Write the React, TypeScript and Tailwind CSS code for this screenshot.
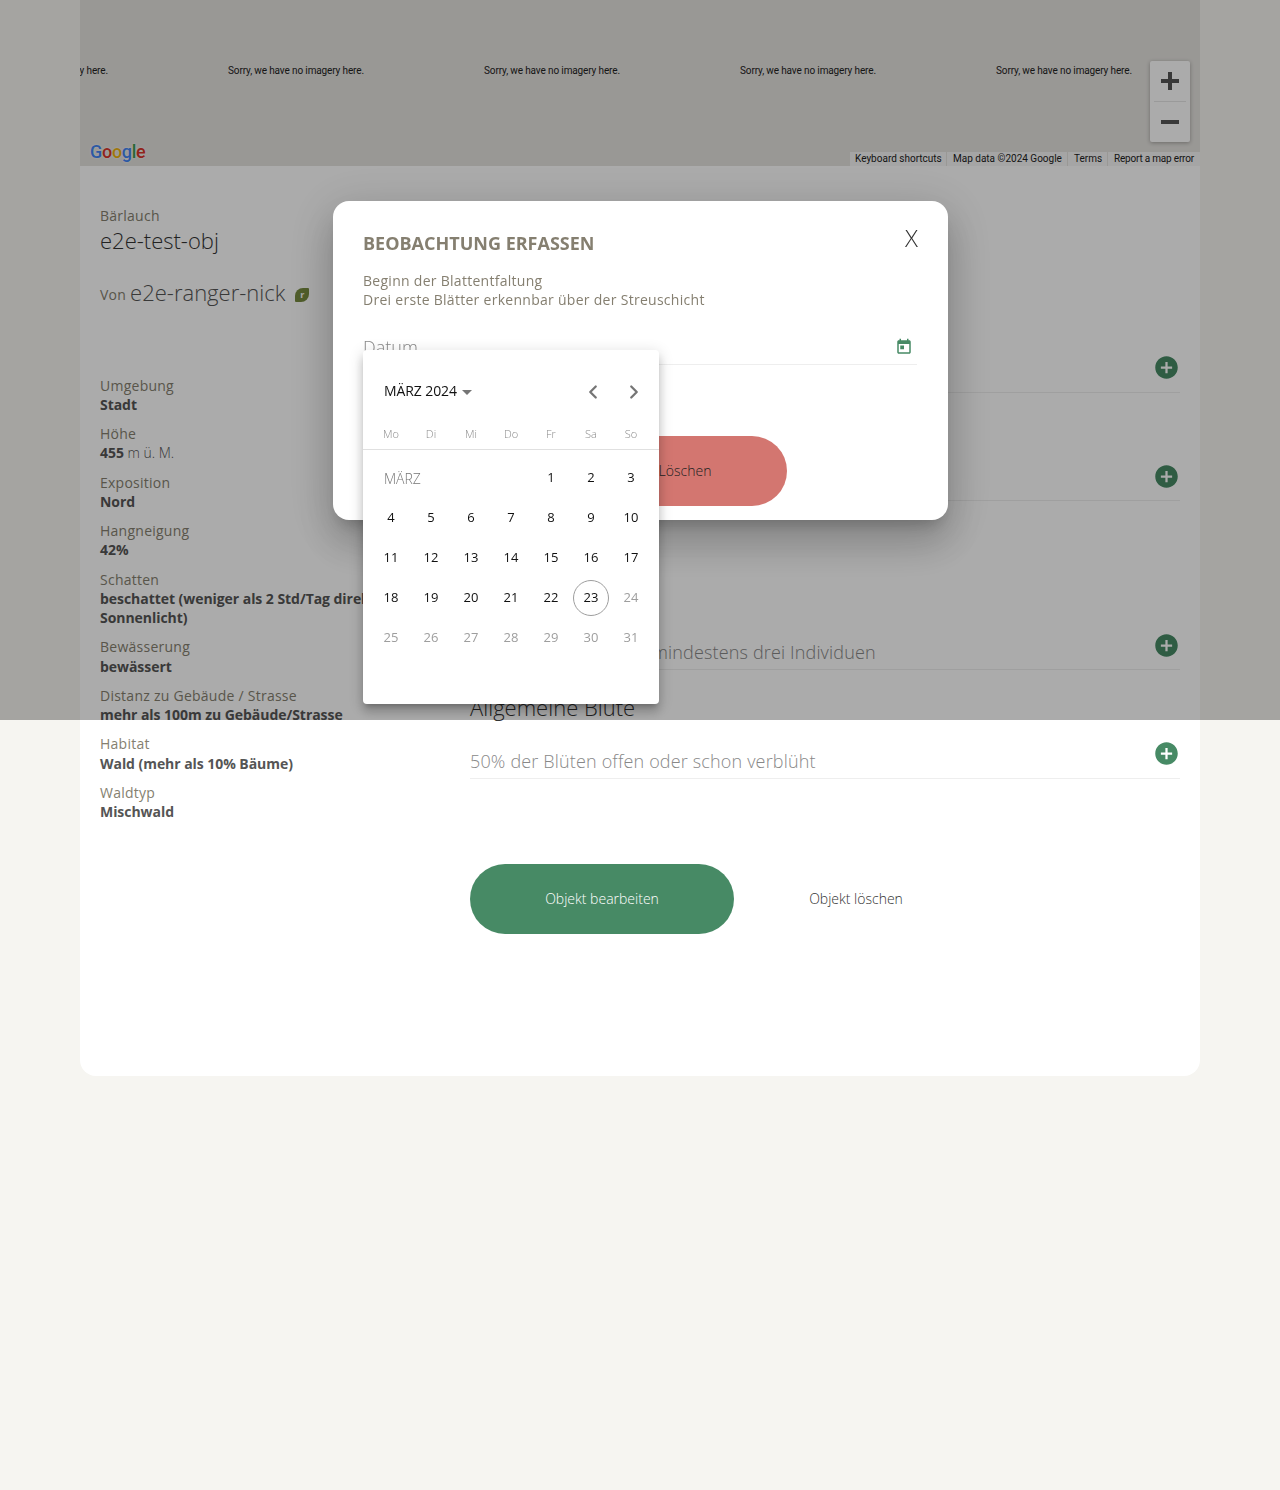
import { ChevronLeft, ChevronRight } from "lucide-react";

const site = [
  { label: "Umgebung", value: "Stadt" },
  { label: "Höhe", value: "455", unit: " m ü. M." },
  { label: "Exposition", value: "Nord" },
  { label: "Hangneigung", value: "42%" },
  { label: "Schatten", value: "beschattet (weniger als 2 Std/Tag direktes Sonnenlicht)" },
  { label: "Bewässerung", value: "bewässert" },
  { label: "Distanz zu Gebäude / Strasse", value: "mehr als 100m zu Gebäude/Strasse" },
  { label: "Habitat", value: "Wald (mehr als 10% Bäume)" },
  { label: "Waldtyp", value: "Mischwald" },
];

const phases = [
  { title: "Beginn der Blattentfaltung", text: "Drei erste Blätter erkennbar über der Streuschicht" },
  { title: "Allgemeine Blattentfaltung", text: "50% der Blätter entfaltet" },
  { title: "Beginn der Blüte", text: "Erste offene Blüte bei mindestens drei Individuen", section: true },
  { title: "Allgemeine Blüte", text: "50% der Blüten offen oder schon verblüht" },
];

const weekdays = ["Mo", "Di", "Mi", "Do", "Fr", "Sa", "So"];
const days = Array.from({ length: 31 }, (_, i) => i + 1);

function AddIcon() {
  return (
    <svg viewBox="0 0 24 24" className="w-[27px] h-[27px] fill-[#478a65]">
      <path d="M12 2C6.48 2 2 6.48 2 12s4.48 10 10 10 10-4.48 10-10S17.52 2 12 2zm5 11h-4v4h-2v-4H7v-2h4V7h2v4h4v2z" />
    </svg>
  );
}

function MapArea() {
  return (
    <div className="relative h-[166px] overflow-hidden bg-[#e5e3df] font-['Roboto',sans-serif] text-black">
      <div className="flex -ml-[168px] pt-[65px]">
        {[0, 1, 2, 3, 4].map((i) => (
          <div key={i} className="w-[256px] shrink-0 text-center text-[10px] leading-[12px] tracking-[-0.13px] text-[#222]">
            Sorry, we have no imagery here.
          </div>
        ))}
      </div>

      {/* Google logo */}
      <div className="absolute left-[10px] top-[141px] text-[18px] leading-[22px] tracking-[-0.3px] font-medium [text-shadow:0_0_2px_#fff]">
        <span className="text-[#4285f4]">G</span>
        <span className="text-[#d8362a]">o</span>
        <span className="text-[#eeb211]">o</span>
        <span className="text-[#4285f4]">g</span>
        <span className="text-[#3c9b4e]">l</span>
        <span className="text-[#d8362a]">e</span>
      </div>

      {/* zoom */}
      <div className="absolute left-[1070px] top-[61px] w-[40px] h-[81px] bg-white rounded-[2px] shadow-[0_1px_4px_rgba(0,0,0,0.3)] flex flex-col items-center">
        <svg viewBox="0 0 18 18" className="w-[18px] h-[18px] mt-[11px] fill-[#555]">
          <path d="M7 0h4v7h7v4h-7v7H7v-7H0V7h7z" />
        </svg>
        <div className="w-[32px] h-px bg-[#e6e6e6] mt-[11px]" />
        <svg viewBox="0 0 18 18" className="w-[18px] h-[18px] mt-[11px] fill-[#555]">
          <path d="M0 7h18v4H0z" />
        </svg>
      </div>

      {/* attribution */}
      <div className="absolute right-0 bottom-0 h-[14px] flex text-[10px] leading-[14px] text-[#222]">
        <span className="bg-white/70 px-[5px] w-[96px] whitespace-nowrap">Keyboard shortcuts</span>
        <span className="bg-white/70 ml-px pl-[6px] w-[120px] whitespace-nowrap">Map data ©2024 Google</span>
        <span className="bg-white/70 ml-px pl-[6px] w-[39px] whitespace-nowrap">Terms</span>
        <span className="bg-white/70 ml-px pl-[6px] w-[92px] whitespace-nowrap tracking-[-0.2px]">Report a map error</span>
      </div>
    </div>
  );
}

function SiteColumn() {
  return (
    <div className="w-[390px] shrink-0 pl-[20px] pr-[60px] pt-[40px] text-[14px] leading-[19.25px]">
      <div className="text-[#857f70] tracking-[0.25px]">Bärlauch</div>
      <h1 className="text-[22px] leading-[30px] font-light text-[#333]">e2e-test-obj</h1>
      <div className="flex items-center mt-[22px] h-[30px] text-[#857f70]">
        <span className="mt-[4px] tracking-[0.25px]">Von</span>
        <span className="ml-[4px] text-[22px] font-light text-[#555]">e2e-ranger-nick</span>
        <span className="ml-[10px] mt-[5px] w-[14px] h-[14px] rounded-tl-[8px] rounded-br-[8px] rounded-tr-[1px] rounded-bl-[1px] bg-[#788c40] text-white text-[9px] leading-[14px] font-bold text-center">
          r
        </span>
      </div>

      <dl className="mt-[68.25px]">
        {site.map((row) => (
          <div key={row.label} className="mb-[10px]">
            <dt className="text-[#857f70] tracking-[0.25px]">{row.label}</dt>
            <dd className="text-[#555]">
              <b className="font-bold tracking-[-0.05px]">{row.value}</b>
              {row.unit && <span className="font-light">{row.unit}</span>}
            </dd>
          </div>
        ))}
      </dl>
    </div>
  );
}

function PhaseColumn() {
  return (
    <div className="flex-1 pr-[20px] pt-[118px]">
      {phases.map((p) => (
        <div
          key={p.title}
          className={`relative h-[108.5px] border-b border-[#eee] pt-[22px] ${p.section ? "mt-[60.5px]" : ""}`}
        >
          <h3 className="text-[22px] leading-[30px] font-light text-[#333]">{p.title}</h3>
          <p className="mt-[26.5px] text-[18px] leading-[24px] font-light tracking-[0.16px] text-[#888]">{p.text}</p>
          <div className="absolute right-0 top-[70px]">
            <AddIcon />
          </div>
        </div>
      ))}

      <div className="flex mt-[85.5px] gap-[20px]">
        <button className="w-[264px] h-[70px] pb-[2px] rounded-full bg-[#478a65] text-white text-[14px] font-light">
          Objekt bearbeiten
        </button>
        <button className="w-[204px] h-[70px] pb-[2px] rounded-full text-[#333] text-[14px] font-light">
          Objekt löschen
        </button>
      </div>
    </div>
  );
}

function Calendar() {
  return (
    <div className="absolute left-[30px] top-[149px] w-[296px] h-[354px] rounded-[4px] bg-white shadow-[0_5px_5px_-3px_rgba(0,0,0,0.2),0_8px_10px_1px_rgba(0,0,0,0.14),0_3px_14px_2px_rgba(0,0,0,0.12)]">
      <div className="flex items-center h-[76px] pl-[21px] pr-[6px] pt-[6px]">
        <span className="text-[14px] text-[#111] font-normal tracking-[-0.1px] -mt-[2px]">MÄRZ 2024</span>
        <span className="ml-[5px] mt-[2px] w-0 h-0 border-x-[5px] border-x-transparent border-t-[5px] border-t-[#757575]" />
        <span className="flex-1" />
        <span className="w-[40px] flex justify-center mt-[2px]">
          <ChevronLeft size={22} strokeWidth={2.5} className="text-[#757575]" />
        </span>
        <span className="w-[40px] flex justify-center mt-[2px]">
          <ChevronRight size={22} strokeWidth={2.5} className="ml-px text-[#757575]" />
        </span>
      </div>
      <div className="grid grid-cols-7 px-[8px] h-[15px] text-[11px] leading-[15px] font-light text-[#8a8a8a] text-center">
        {weekdays.map((d) => (
          <span key={d}>{d}</span>
        ))}
      </div>
      <div className="h-px bg-[#e0e0e0] mt-[8px] mb-[8px]" />
      <div className="grid grid-cols-[repeat(7,40px)] auto-rows-[40px] px-[8px] text-[13px]">
        <div className="col-span-4 pl-[13px] flex items-center text-[14px] font-light text-[#757575]">MÄRZ</div>
        {days.map((d) => (
          <div key={d} className="flex items-center justify-center">
            <span
              className={`w-[36px] h-[36px] rounded-full flex items-center justify-center ${
                d === 23 ? "border border-[#9e9e9e]" : ""
              } ${d > 23 ? "text-[#9e9e9e]" : "text-[#111]"}`}
            >
              {d}
            </span>
          </div>
        ))}
      </div>
    </div>
  );
}

function ObservationDialog() {
  return (
    <div className="absolute left-[333px] top-[201px] w-[615px] h-[319px] rounded-[16px] bg-white p-[30px] text-[#857f70] shadow-[0_11px_15px_-7px_rgba(0,0,0,0.2),0_24px_38px_3px_rgba(0,0,0,0.14),0_9px_46px_8px_rgba(0,0,0,0.12)]">
      <h2 className="text-[18px] leading-[24px] font-bold uppercase">Beobachtung erfassen</h2>
      <span className="absolute right-[30px] top-[20px] text-[24px] leading-[33px] font-light text-[#333]">X</span>
      <p className="mt-[16px] text-[14px] leading-[19px] tracking-[0.28px]">
        Beginn der Blattentfaltung
        <br />
        Drei erste Blätter erkennbar über der Streuschicht
      </p>

      <div className="flex items-center justify-between mt-[20px] w-[554px] h-[36px] border-b border-[#eee]">
        <span className="text-[18px] font-light text-[#888] mt-[2px]">Datum</span>
        <svg viewBox="0 0 24 24" className="w-[18px] h-[18px] mr-[4px] fill-[#478a65]">
          <path d="M19 3h-1V1h-2v2H8V1H6v2H5c-1.11 0-1.99.9-1.99 2L3 19c0 1.1.89 2 2 2h14c1.1 0 2-.9 2-2V5c0-1.1-.9-2-2-2zm0 16H5V8h14v11zM7 10h5v5H7z" />
        </svg>
      </div>

      <div className="flex gap-[20px] mt-[71px]">
        <button className="w-[200px] h-[70px] rounded-full bg-[#478a65] text-white text-[14px] font-light">
          Speichern
        </button>
        <button className="w-[204px] h-[70px] rounded-full bg-[#d37670] text-[#222] text-[14px] font-light pb-[2px]">
          Löschen
        </button>
      </div>

      <Calendar />
    </div>
  );
}

export default function App() {
  return (
    <div className="min-h-[1490px] bg-[#f6f5f1] font-['Open_Sans',sans-serif]">
      <div className="w-[1120px] mx-auto h-[1076px] bg-white rounded-b-[16px] overflow-hidden">
        <MapArea />
        <div className="flex">
          <SiteColumn />
          <PhaseColumn />
        </div>
      </div>

      <div className="fixed inset-x-0 top-0 h-[720px] overflow-hidden bg-black/33">
        <ObservationDialog />
      </div>
    </div>
  );
}
